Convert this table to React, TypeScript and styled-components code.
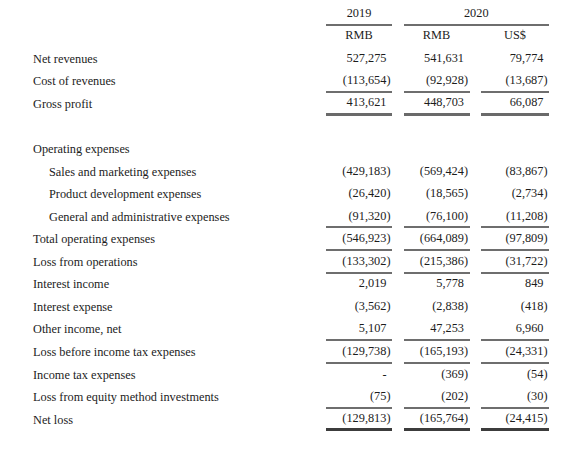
import React from "react";
import styled, { createGlobalStyle } from "styled-components";

const Global = createGlobalStyle`
  html, body { margin: 0; padding: 0; background: #ffffff; }
  body { font-family: "Liberation Serif", "Times New Roman", serif; color: #1c1c1c; }
`;

const ROW_H = 22.56;

const Sheet = styled.div`
  width: 588px;
  height: 449px;
  box-sizing: border-box;
  padding: 3px 39px 0 33px;
  font-size: 12.3px;
`;

const Row = styled.div`
  display: grid;
  grid-template-columns: 1fr 66px 66px 68px;
  column-gap: 11.5px;
  height: ${ROW_H}px;
`;

const Label = styled.div<{ $indent?: boolean }>`
  display: flex;
  align-items: center;
  padding-left: ${(p) => (p.$indent ? 16 : 0)}px;
  white-space: nowrap;
`;

type LineKind = "none" | "single" | "double" | "heavy";

const lineStyle = (k: LineKind) => {
  switch (k) {
    case "single":
      return "border-bottom: 2px solid #6e6e6e;";
    case "double":
      return "border-bottom: 3px solid #6a6a6a;";
    case "heavy":
      return "border-bottom: 3px solid #3c3c3c;";
    default:
      return "border-bottom: 2px solid transparent;";
  }
};

const Num = styled.div<{ $line: LineKind; $neg: boolean }>`
  box-sizing: border-box;
  display: flex;
  align-items: center;
  justify-content: flex-end;
  padding-right: ${(p) => (p.$neg ? 1.5 : 5.5)}px;
  white-space: nowrap;
  ${(p) => lineStyle(p.$line)}
`;

const Head = styled.div<{ $span?: number; $line?: boolean }>`
  box-sizing: border-box;
  display: flex;
  align-items: center;
  justify-content: center;
  grid-column: ${(p) => (p.$span ? `span ${p.$span}` : "auto")};
  ${(p) => (p.$line ? lineStyle("single") : lineStyle("none"))}
`;

type Data = {
  label?: string;
  indent?: boolean;
  values?: (number | null)[];
  line?: LineKind;
};

const rows: Data[] = [
  { label: "Net revenues", values: [527275, 541631, 79774] },
  { label: "Cost of revenues", values: [-113654, -92928, -13687], line: "single" },
  { label: "Gross profit", values: [413621, 448703, 66087], line: "double" },
  {},
  { label: "Operating expenses" },
  { label: "Sales and marketing expenses", indent: true, values: [-429183, -569424, -83867] },
  { label: "Product development expenses", indent: true, values: [-26420, -18565, -2734] },
  { label: "General and administrative expenses", indent: true, values: [-91320, -76100, -11208], line: "single" },
  { label: "Total operating expenses", values: [-546923, -664089, -97809], line: "single" },
  { label: "Loss from operations", values: [-133302, -215386, -31722], line: "single" },
  { label: "Interest income", values: [2019, 5778, 849] },
  { label: "Interest expense", values: [-3562, -2838, -418] },
  { label: "Other income, net", values: [5107, 47253, 6960], line: "single" },
  { label: "Loss before income tax expenses", values: [-129738, -165193, -24331], line: "single" },
  { label: "Income tax expenses", values: [null, -369, -54] },
  { label: "Loss from equity method investments", values: [-75, -202, -30], line: "single" },
  { label: "Net loss", values: [-129813, -165764, -24415], line: "heavy" },
];

const fmt = (v: number | null) => {
  if (v === null) return "-";
  const s = Math.abs(v).toLocaleString("en-US");
  return v < 0 ? `(${s})` : s;
};

export default function App() {
  return (
    <>
      <Global />
      <Sheet>
        <Row>
          <Label />
          <Head $line>2019</Head>
          <Head $span={2} $line>
            2020
          </Head>
        </Row>
        <Row>
          <Label />
          <Head>RMB</Head>
          <Head>RMB</Head>
          <Head>US$</Head>
        </Row>
        {rows.map((r, i) => (
          <Row key={i}>
            <Label $indent={r.indent}>{r.label}</Label>
            {[0, 1, 2].map((c) => {
              const v = r.values ? r.values[c] : undefined;
              return (
                <Num key={c} $line={r.line ?? "none"} $neg={typeof v === "number" && v < 0}>
                  {v === undefined ? "" : fmt(v)}
                </Num>
              );
            })}
          </Row>
        ))}
      </Sheet>
    </>
  );
}
